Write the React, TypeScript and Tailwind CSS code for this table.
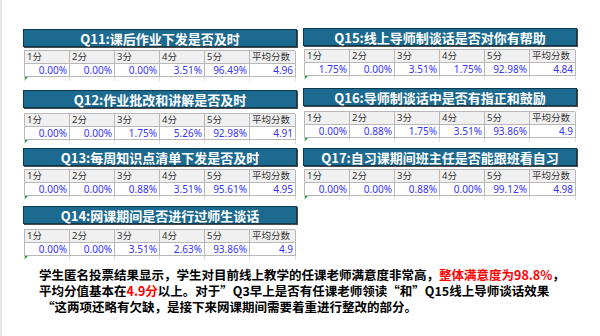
import React from 'react';

type Survey = {
  title: string;
  values: string[];
  mt: string;
  gap: string;
};

const labels = ['1分', '2分', '3分', '4分', '5分', '平均分数'];

const left: Survey[] = [
  { title: 'Q11:课后作业下发是否及时', values: ['0.00%', '0.00%', '0.00%', '3.51%', '96.49%', '4.96'], mt: 'mt-[29px]', gap: 'mt-[3px]' },
  { title: 'Q12:作业批改和讲解是否及时', values: ['0.00%', '0.00%', '1.75%', '5.26%', '92.98%', '4.91'], mt: 'mt-[9px]', gap: 'mt-[5px]' },
  { title: 'Q13:每周知识点清单下发是否及时', values: ['0.00%', '0.00%', '0.88%', '3.51%', '95.61%', '4.95'], mt: 'mt-[4px]', gap: 'mt-[3px]' },
  { title: 'Q14:网课期间是否进行过师生谈话', values: ['0.00%', '0.00%', '3.51%', '2.63%', '93.86%', '4.9'], mt: 'mt-[6px]', gap: 'mt-[5px]' },
];

const right: Survey[] = [
  { title: 'Q15:线上导师制谈话是否对你有帮助', values: ['1.75%', '0.00%', '3.51%', '1.75%', '92.98%', '4.84'], mt: 'mt-[28px]', gap: 'mt-[3px]' },
  { title: 'Q16:导师制谈话中是否有指正和鼓励', values: ['0.00%', '0.88%', '1.75%', '3.51%', '93.86%', '4.9'], mt: 'mt-[8px]', gap: 'mt-[5px]' },
  { title: 'Q17:自习课期间班主任是否能跟班看自习', values: ['0.00%', '0.00%', '0.88%', '0.00%', '99.12%', '4.98'], mt: 'mt-[6px]', gap: 'mt-[3px]' },
];

function SurveyBlock({ survey }: { survey: Survey }) {
  return (
    <div className={survey.mt}>
      {/* Title bar */}
      <div className="h-[18px] bg-[#1d6a90] border border-[#0e3a50] shadow-[1px_1px_0_#4a4a4a] flex items-center justify-center text-white font-bold text-[13px] leading-none font-['Noto_Sans_CJK_SC',sans-serif] whitespace-nowrap">
        {survey.title}
      </div>

      {/* Score table */}
      <div className={`${survey.gap} ml-[1px] w-[271px] grid grid-cols-[45px_45px_45px_45px_45px_46px] border-t border-l border-[#b8b8b8] font-['Noto_Sans','Noto_Sans_CJK_SC',sans-serif]`}>
        {labels.map((l) => (
          <div
            key={l}
            className="h-[13px] bg-[#f0f0f0] border-r border-b border-[#b8b8b8] pl-[2px] text-[9.5px] leading-[12px] text-[#333333] whitespace-nowrap"
          >
            {l}
          </div>
        ))}
        {survey.values.map((v, i) => (
          <div
            key={i}
            className="h-[13px] bg-white border-r border-b border-[#b8b8b8] pr-[2px] text-right text-[10px] leading-[12px] text-[#3434ff] whitespace-nowrap"
          >
            {v}
          </div>
        ))}
      </div>

      {/* faint grid lines of the next sheet row */}
      <div className="relative ml-[1px] w-[271px] h-[4px] grid grid-cols-[45px_45px_45px_45px_45px_46px] border-l border-[#dddddd]">
        {labels.map((l) => (
          <div key={l} className="border-r border-[#dddddd]" />
        ))}
        <div className="absolute left-0 top-0 w-0 h-0 border-t-[3px] border-r-[3px] border-t-[#1e9b3a] border-r-transparent" />
      </div>
    </div>
  );
}

export default function App() {
  return (
    <div className="w-[600px] h-[336px] bg-white border-l-2 border-[#e6e6e6] overflow-hidden">
      <div className="flex gap-[6px] pl-[21px]">
        <div className="w-[274px] flex flex-col">
          {left.map((s) => (
            <SurveyBlock key={s.title} survey={s} />
          ))}
        </div>
        <div className="w-[274px] flex flex-col">
          {right.map((s) => (
            <SurveyBlock key={s.title} survey={s} />
          ))}
        </div>
      </div>

      <p className="mt-[7px] ml-[37px] text-[12.5px] leading-[16px] font-bold text-black whitespace-nowrap font-['Noto_Sans_CJK_SC',sans-serif]">
        学生匿名投票结果显示，学生对目前线上教学的任课老师满意度非常高，
        <span className="text-[#ff0000]">整体满意度为98.8%</span>，
        <br />
        平均分值基本在<span className="text-[#ff0000]">4.9分</span>以上。对于”Q3早上是否有任课老师领读“和”Q15线上导师谈话效果
        <br />
        <span className="ml-[3px]">“这两项还略有欠缺，是接下来网课期间需要着重进行整改的部分。</span>
      </p>
    </div>
  );
}
